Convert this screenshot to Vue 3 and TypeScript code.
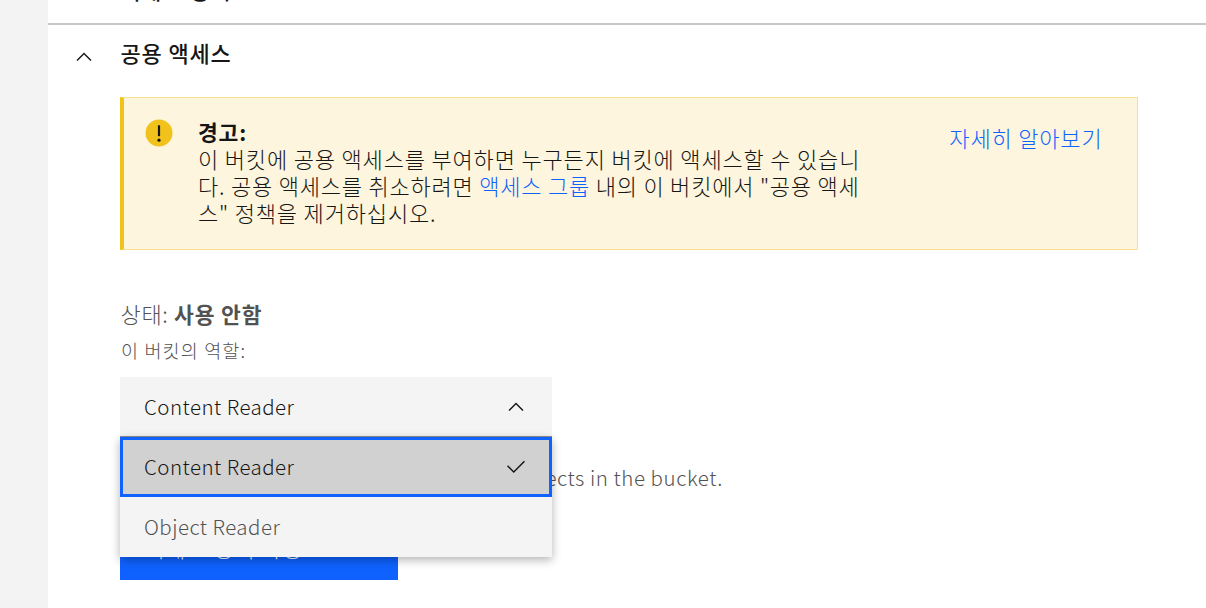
<script setup lang="ts">
import { ref } from 'vue'

const roles = ['Content Reader', 'Object Reader']
const selected = ref(roles[0])
</script>

<template>
  <div class="page">
    <aside class="rail"></aside>
    <main class="main">
      <section class="prev"><h2 class="heading">액세스 정책</h2></section>
      <section class="panel">
        <svg class="toggle" width="24" height="24" viewBox="0 0 16 16"><path d="M8 5l5 5-.7.7L8 6.4l-4.3 4.3L3 10z" /></svg>
        <div class="content">
          <h2 class="heading">공용 액세스</h2>
          <div class="notice">
            <svg class="warn" width="28" height="28" viewBox="0 0 28 28">
              <circle cx="14" cy="14" r="13.5" fill="#f1c21b" />
              <path d="M12.9 6.3h2.2v10.9h-2.2z" fill="#161616" />
              <circle cx="14" cy="21.2" r="1.6" fill="#161616" />
            </svg>
            <div class="message">
              <strong>경고:</strong>
              <p class="l1">이 버킷에 공용 액세스를 부여하면 누구든지 버킷에 액세스할 수 있습니</p>
              <p class="l2">다. 공용 액세스를 취소하려면 <a>액세스 그룹</a> 내의 이 버킷에서 "공용 액세</p>
              <p class="l3">스" 정책을 제거하십시오.</p>
            </div>
            <a class="more">자세히 알아보기</a>
          </div>
          <p class="status">상태: <b>사용 안함</b></p>
          <p class="label">이 버킷의 역할:</p>
          <div class="dropdown">
            <div class="field">
              <span>{{ selected }}</span>
              <svg width="24" height="24" viewBox="0 0 16 16"><path d="M8 5l5 5-.7.7L8 6.4l-4.3 4.3L3 10z" /></svg>
            </div>
            <ul class="menu">
              <li v-for="role in roles" :key="role" :class="{ active: role === selected }" @click="selected = role">
                <span>{{ role }}</span>
                <svg v-if="role === selected" width="24" height="24" viewBox="0 0 32 32"><path d="M13 24l-9-9 1.4-1.4L13 21.2 26.6 7.6 28 9z" /></svg>
              </li>
            </ul>
          </div>
          <p class="help"><span>Can list and read objects in the bucket.</span></p>
          <button class="submit">액세스 정책 작성</button>
        </div>
      </section>
    </main>
  </div>
</template>

<style>
body { margin: 0; overflow: hidden; }
</style>

<style scoped>
.page { display: flex; width: 1206px; height: 608px; overflow: hidden; background: #fff; color: #161616; font: 300 22px/27px "Noto Sans CJK KR", sans-serif; letter-spacing: 0.83px; }
.page * { box-sizing: border-box; }
.rail { width: 48px; background: #f3f3f3; flex: none; }
.main { flex: 1; min-width: 0; }
.prev { height: 25px; border-bottom: 2px solid #c6c6c6; padding-left: 72px; display: flex; align-items: flex-end; }
.heading { margin: 0; font-size: 22px; line-height: 27px; font-weight: 500; white-space: nowrap; }
.prev .heading { margin-bottom: 20px; }
.panel { display: flex; }
.panel .heading { padding-left: 0.5px; }
.toggle { margin: 20px 0 0 24px; flex: none; }
svg { display: block; fill: #161616; }
.content { margin-left: 24px; padding-top: 14px; width: 1018px; }
.notice { display: flex; height: 153px; margin-top: 31px; background: #fdf5dd; border: 1px solid #f8e08e; border-left: 4px solid #f1c21b; }
.warn { margin: 21px 0 0 21px; flex: none; }
.message { margin: 20px 0 0 25px; width: 700px; }
.message strong { display: block; font-weight: 700; font-size: 21.5px; }
p { margin: 0; white-space: nowrap; }
.l2 { letter-spacing: 0.79px; }
a { color: #0f62fe; }
.more { margin: 26px 34.5px 0 auto; white-space: nowrap; }
.status { margin-top: 50px; padding-left: 0.5px; letter-spacing: 0.65px; color: #525252; }
.status b { font-weight: 700; font-size: 21.5px; letter-spacing: 0.9px; }
.label { margin-top: 11px; padding-left: 1px; font-size: 18.5px; line-height: 24px; letter-spacing: 1.15px; color: #525252; }
.dropdown { position: relative; width: 432px; margin-top: 15px; font-size: 20.5px; letter-spacing: 0.46px; }
.field { display: flex; align-items: center; justify-content: space-between; height: 60px; padding: 0 24px; background: #f4f4f4; border-bottom: 1px solid #8d8d8d; }
.menu { position: absolute; top: 60px; left: 0; width: 432px; margin: 0; padding: 0; list-style: none; background: #f4f4f4; box-shadow: 0 3px 9px rgba(0, 0, 0, 0.3); }
.menu li { display: flex; align-items: center; justify-content: space-between; height: 60px; padding: 0 24px; color: #525252; }
.menu span { margin-top: -2px; }
.menu .active { background: #d1d1d1; color: #161616; outline: 3px solid #0f62fe; outline-offset: -3px; }
.help { display: flex; justify-content: flex-end; width: 603px; margin-top: 27px; color: #525252; font-size: 20.5px; letter-spacing: 0.55px; }
.submit { display: block; width: 278px; height: 72px; margin-top: 17px; padding: 7px 24px 0 24px; border: 0; background: #0f62fe; color: #fff; font: inherit; letter-spacing: inherit; text-align: left; }
</style>
